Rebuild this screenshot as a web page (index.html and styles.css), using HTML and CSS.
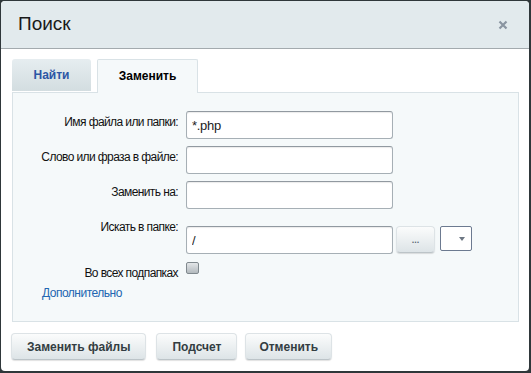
FILE: index.html
```html
<!DOCTYPE html>
<html lang="ru">
<head>
    <meta charset="UTF-8">
    <title>Поиск</title>
    <link rel="stylesheet" href="styles.css">
</head>
<body>
    <div class="dialog">
        <div class="dialog-head">
            <span class="dialog-title">Поиск</span>
            <span class="dialog-close">
                <svg width="10" height="10" viewBox="0 0 10 10">
                    <path d="M1.5 1.5 L8.5 8.5 M8.5 1.5 L1.5 8.5" stroke="#8a95a1" stroke-width="2.2" fill="none"/>
                </svg>
            </span>
        </div>

        <div class="dialog-body">
            <div class="tabs">
                <div class="tab">Найти</div>
                <div class="tab tab-active">Заменить</div>
            </div>

            <div class="panel">
                <div class="form">
                    <label class="form-label">Имя файла или папки:</label>
                    <div class="form-field"><input class="text-input" type="text" value="*.php"></div>

                    <label class="form-label">Слово или фраза в файле:</label>
                    <div class="form-field"><input class="text-input" type="text"></div>

                    <label class="form-label">Заменить на:</label>
                    <div class="form-field"><input class="text-input" type="text"></div>

                    <label class="form-label label-folder">Искать в папке:</label>
                    <div class="form-field field-folder">
                        <input class="text-input" type="text" value="/">
                        <button class="btn btn-dots">...</button>
                        <div class="select-box"><span class="select-arrow"></span></div>
                    </div>

                    <label class="form-label label-check">Во всех подпапках</label>
                    <div class="form-field field-check"><span class="checkbox"></span></div>
                </div>
                <a class="more-link" href="#">Дополнительно</a>
            </div>

            <div class="buttons">
                <button class="btn">Заменить файлы</button>
                <button class="btn btn-count">Подсчет</button>
                <button class="btn btn-cancel">Отменить</button>
            </div>
        </div>
    </div>
</body>
</html>
```

FILE: styles.css
```css
html, body {
    margin: 0;
    padding: 0;
}

body {
    background: #2f373a;
    font-family: "Liberation Sans", Arial, sans-serif;
    font-size: 12px;
    color: #000;
    width: 531px;
    height: 373px;
    overflow: hidden;
}

.dialog {
    margin: 1px;
    width: 528px;
    height: 370px;
    background: #fff;
    border-radius: 4px;
    overflow: hidden;
    display: flex;
    flex-direction: column;
}

.dialog-head {
    height: 47px;
    background: #e2eaed;
    border-bottom: 1px solid #a3aaae;
    display: flex;
    align-items: center;
    justify-content: space-between;
    padding: 0 21px 0 17px;
}

.dialog-title {
    font-size: 19px;
    color: #1a1a1a;
    margin-top: -1px;
}

.dialog-close {
    display: flex;
    margin-top: 1px;
}

.dialog-body {
    padding: 10px 10px 0 11px;
}

.tabs {
    display: flex;
    align-items: flex-end;
    gap: 6px;
    height: 34px;
    position: relative;
    z-index: 1;
    margin-bottom: -1px;
}

.tab {
    width: 79px;
    height: 32px;
    margin-bottom: 2px;
    line-height: 32px;
    text-align: center;
    font-weight: bold;
    color: #2c55a5;
    background: linear-gradient(#e6edf0, #d3dde0);
    border-radius: 3px 3px 0 0;
}

.tab-active {
    width: 99px;
    height: 33px;
    margin-bottom: 0;
    line-height: 32px;
    color: #000;
    background: #f5f9fa;
    border: 1px solid #d9e2e6;
    border-bottom: none;
    border-radius: 2px 2px 0 0;
}

.panel {
    height: 210px;
    background: #f5f9fa;
    border: 1px solid #d9e2e6;
    padding: 18px 0 0 0;
}

.form {
    display: grid;
    grid-template-columns: 165px auto;
    column-gap: 8px;
    row-gap: 7px;
}

.form-label {
    text-align: right;
    padding-top: 4px;
    line-height: 15px;
    letter-spacing: -0.6px;
    color: #111;
}

.form-field {
    display: flex;
    align-items: flex-start;
}

.text-input {
    box-sizing: border-box;
    width: 207px;
    height: 28px;
    border: 1px solid #a6afb5;
    border-top-color: #9199a0;
    border-radius: 3px;
    background: #fff;
    box-shadow: inset 0 1px 1px rgba(0, 0, 0, 0.08);
    font-family: "Liberation Sans", Arial, sans-serif;
    font-size: 13px;
    letter-spacing: -0.3px;
    color: #222;
    padding: 0 5px;
    margin: 0;
    outline: none;
}

.label-folder {
    margin-top: 4px;
    padding-top: 0;
}

.field-folder {
    margin-top: 10px;
}

.label-check {
    padding-top: 5px;
}

.field-check {
    padding-top: 1px;
}

.btn {
    height: 27px;
    padding: 0 15px;
    border: 1px solid #dde3e6;
    border-bottom-color: #bcc4c8;
    border-radius: 4px;
    background: linear-gradient(#fbfcfc, #dde4e7);
    box-shadow: 0 1px 1px rgba(0, 0, 0, 0.12);
    font-family: "Liberation Sans", Arial, sans-serif;
    font-size: 12px;
    font-weight: bold;
    color: #333d42;
    margin: 0;
}

.btn-count {
    margin-left: 1px;
}

.btn-cancel {
    padding: 0 13px;
    margin-left: -1px;
}

.btn-dots {
    width: 39px;
    height: 27px;
    padding: 0;
    margin-left: 3px;
    font-size: 9px;
    color: #5c6b76;
}

.select-box {
    box-sizing: border-box;
    width: 32px;
    height: 25px;
    margin-left: 5px;
    border: 1px solid #6c7a90;
    border-radius: 2px;
    background: #fff;
    position: relative;
}

.select-arrow {
    position: absolute;
    right: 6px;
    top: 10px;
    border-left: 3px solid transparent;
    border-right: 3px solid transparent;
    border-top: 4px solid #6d7783;
}

.checkbox {
    box-sizing: border-box;
    display: block;
    width: 13px;
    height: 12px;
    border: 1px solid #80898e;
    border-radius: 2px;
    background: linear-gradient(#e3e6e8, #b3babe);
}

.more-link {
    display: inline-block;
    margin: 5px 0 0 29px;
    color: #2266b1;
    text-decoration: none;
    line-height: 15px;
    letter-spacing: -0.5px;
}

.buttons {
    display: flex;
    gap: 9px;
    margin: 11px 0 0 -1px;
}
```
